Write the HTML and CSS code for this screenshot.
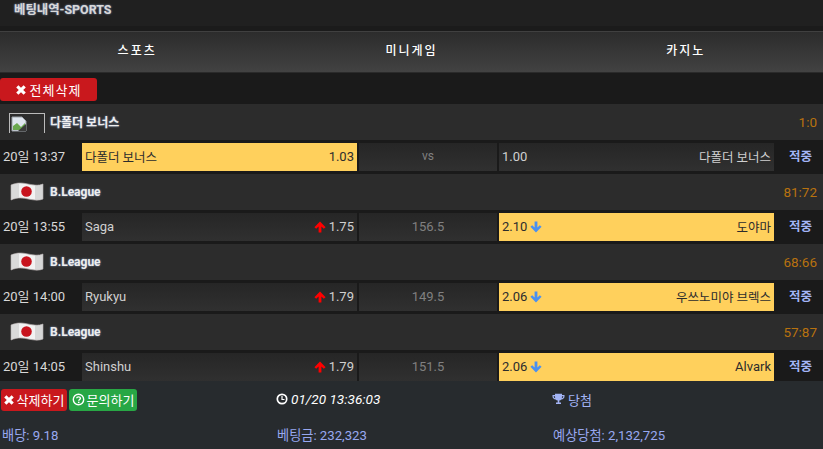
FILE: index.html
```html
<!DOCTYPE html>
<html lang="en">
<head>
<meta charset="UTF-8">
<meta name="viewport" content="width=device-width, initial-scale=1.0">
<title>베팅내역-SPORTS</title>
<link rel="stylesheet" href="styles.css">
</head>
<body>

<svg class="defs" width="0" height="0">
    <symbol id="i-times" viewBox="1 1 10 10"><path d="M1.2 3.4 3.4 1.2 6 3.800 8.600 1.200 10.800 3.400 8.200 6 10.800 8.600 8.600 10.800 6 8.200 3.400 10.800 1.200 8.600 3.800 6Z"/></symbol>
    <symbol id="i-up" viewBox="0 0 12 12"><path d="M6 .6 11.6 6.2 9.8 7.8 7.4 5.4V11.6H4.6V5.4L2.2 7.8.4 6.2Z"/></symbol>
    <symbol id="i-down" viewBox="0 0 12 12"><path d="M6 11.4 11.6 5.8 9.8 4.2 7.4 6.6V.4H4.6V6.6L2.2 4.2.4 5.8Z"/></symbol>
    <symbol id="i-flag" viewBox="0 0 34 19">
        <path d="M1 3C8 0 13 1 18 2 24 3 28 4 33 2V17C28 19 24 18 18 17 13 16 8 15 1 18Z" fill="#f2f2f2" stroke="#a8a0a0" stroke-width=".7"/>
        <path d="M1 3C4 2 7 1.500 9 1.500V15.500C7 15.800 4 16.500 1 18Z" fill="#c9c9c9" opacity=".6"/>
        <path d="M25 3.200C28 3.400 30 3 33 2V17C30 18 28 18.200 25 18Z" fill="#c4c4c4" opacity=".6"/>
        <circle cx="16.500" cy="9.500" r="5.300" fill="#c8141e"/>
    </symbol>
</svg>

<div class="title-bar">베팅내역-SPORTS</div>

<div class="tabs">
    <a class="tab">스포츠</a>
    <a class="tab">미니게임</a>
    <a class="tab">카지노</a>
</div>

<div class="toolbar">
    <button class="btn btn-red btn-all"><svg class="ico"><use href="#i-times"/></svg>전체삭제</button>
</div>

<div class="league">
    <span class="broken">
        <svg width="16" height="16" viewBox="0 0 16 16">
            <path d="M1 1H11L15 5V15H1Z" fill="#dfe6ef" stroke="#9aa0a6" stroke-width="1"/>
            <path d="M2 14V10L6 7 10 11 14 7V14Z" fill="#6aa84f"/>
            <path d="M7 15 15 8V15Z" fill="#3a3a3a"/>
        </svg>
    </span>
    <span class="league-name">다폴더 보너스</span>
    <span class="score">1:0</span>
</div>
<div class="match">
    <span class="time">20일 13:37</span>
    <div class="odd picked"><span class="ko">다폴더 보너스</span><span class="rate">1.03</span></div>
    <div class="mid vs">vs</div>
    <div class="odd"><span class="rate">1.00</span><span class="ko">다폴더 보너스</span></div>
    <span class="status">적중</span>
</div>

<div class="league">
    <svg class="flag"><use href="#i-flag"/></svg>
    <span class="league-name">B.League</span>
    <span class="score">81:72</span>
</div>
<div class="match">
    <span class="time">20일 13:55</span>
    <div class="odd"><span>Saga</span><span class="rate"><svg class="arrow up"><use href="#i-up"/></svg>1.75</span></div>
    <div class="mid">156.5</div>
    <div class="odd picked"><span class="rate">2.10<svg class="arrow down"><use href="#i-down"/></svg></span><span class="ko">도야마</span></div>
    <span class="status">적중</span>
</div>

<div class="league">
    <svg class="flag"><use href="#i-flag"/></svg>
    <span class="league-name">B.League</span>
    <span class="score">68:66</span>
</div>
<div class="match">
    <span class="time">20일 14:00</span>
    <div class="odd"><span>Ryukyu</span><span class="rate"><svg class="arrow up"><use href="#i-up"/></svg>1.79</span></div>
    <div class="mid">149.5</div>
    <div class="odd picked"><span class="rate">2.06<svg class="arrow down"><use href="#i-down"/></svg></span><span class="ko">우쓰노미야 브렉스</span></div>
    <span class="status">적중</span>
</div>

<div class="league">
    <svg class="flag"><use href="#i-flag"/></svg>
    <span class="league-name">B.League</span>
    <span class="score">57:87</span>
</div>
<div class="match last">
    <span class="time">20일 14:05</span>
    <div class="odd"><span>Shinshu</span><span class="rate"><svg class="arrow up"><use href="#i-up"/></svg>1.79</span></div>
    <div class="mid">151.5</div>
    <div class="odd picked"><span class="rate">2.06<svg class="arrow down"><use href="#i-down"/></svg></span><span>Alvark</span></div>
    <span class="status">적중</span>
</div>

<div class="summary">
    <div class="summary-cell actions">
        <button class="btn btn-red"><svg class="ico"><use href="#i-times"/></svg>삭제하기</button>
        <button class="btn btn-green">
            <svg class="ico ico-q" viewBox="0 0 12 12"><circle cx="6" cy="6" r="4.800" fill="none" stroke="#fff" stroke-width="1.300"/><path d="M4.300 4.900C4.400 3.200 7.800 3.100 7.800 4.900 7.800 6 6.200 6 6.200 7.200" fill="none" stroke="#fff" stroke-width="1.300"/><rect x="5.500" y="8" width="1.400" height="1.300" fill="#fff"/></svg>문의하기</button>
    </div>
    <div class="summary-cell bet-time">
        <svg class="ico-clock" viewBox="0 0 12 12"><circle cx="6" cy="6" r="4.700" fill="none" stroke="#fff" stroke-width="1.700"/><path d="M6 3V6.500H8.500" fill="none" stroke="#fff" stroke-width="1.200"/></svg>
        <em>01/20 13:36:03</em>
    </div>
    <div class="summary-cell result">
        <svg class="ico-trophy" viewBox="0 0 13 12"><path d="M3 .8H10V2H12.500V3.500C12.500 5.300 11 6.300 9.400 6.400 8.900 7 8.200 7.300 7.300 7.500V9.500H9V11H4V9.500H5.700V7.500C4.800 7.300 4.100 7 3.600 6.400 2 6.300 .5 5.300 .5 3.500V2H3ZM1.700 3.200V3.600C1.700 4.400 2.400 5 3.200 5.200 3.100 4.600 3 3.900 3 3.200ZM11.300 3.200H10C10 3.900 9.900 4.600 9.800 5.200 10.600 5 11.300 4.400 11.300 3.600Z"/></svg>
        당첨
    </div>
    <div class="summary-cell total">배당: 9.18</div>
    <div class="summary-cell total">베팅금: 232,323</div>
    <div class="summary-cell total">예상당첨: 2,132,725</div>
</div>

</body>
</html>
```

FILE: styles.css
```css
* {
    box-sizing: border-box;
}

body {
    margin: 0;
    height: 449px;
    overflow: hidden;
    background-color: #1a1a1a;
    font-family: Roboto, "Noto Sans CJK KR", sans-serif;
    font-size: 13px;
    color: #ccc;
}

.defs {
    position: absolute;
}

.title-bar {
    height: 32px;
    padding: 1px 0 0 14px;
    line-height: 17px;
    background: linear-gradient(to bottom, #202020 0, #202020 26px, #1b1b1b 26px, #1b1b1b 31px, #404040 31px);
    color: #d8d8d8;
    font-size: 12.400px;
    font-weight: bold;
    text-shadow: 0 0 2px #8aa0c8;
}

.tabs {
    display: grid;
    grid-template-columns: repeat(3, 1fr);
    height: 41px;
    background: linear-gradient(to bottom, #2c2c2c, #424242);
    border-bottom: 1px solid #2a2a2a;
}

.tab {
    text-align: center;
    line-height: 39px;
    color: #fff;
    font-size: 12px;
    font-weight: 500;
    letter-spacing: 2px;
}

.toolbar {
    height: 31px;
    padding-top: 5px;
}

.btn {
    display: inline-flex;
    align-items: center;
    justify-content: center;
    border: none;
    border-radius: 3px;
    color: #fff;
    font-family: inherit;
    font-size: 13px;
    padding: 0;
}

.btn-red {
    background-color: #c9181d;
}

.btn-green {
    background-color: #28a745;
}

.btn-all {
    width: 97px;
    height: 23px;
    letter-spacing: 1px;
}

.ico {
    width: 10px;
    height: 10px;
    margin-right: 4px;
    fill: #fff;
}

.league {
    display: flex;
    align-items: center;
    height: 36px;
    padding: 0 6px 1px 0;
    background-color: #2c2c2c;
}

.broken {
    display: flex;
    align-items: flex-end;
    width: 36px;
    height: 20px;
    margin: 3px 5px 0 9px;
    padding: 1px;
    border: 1px solid #bbb;
    border-bottom: none;
}

.flag {
    width: 34px;
    height: 19px;
    margin: 0 6px 0 10px;
}

.league-name {
    color: #eee;
    font-size: 12px;
    font-weight: bold;
    text-shadow: 0 0 2px #8aa0c8;
}

.score {
    margin-left: auto;
    color: #b8720f;
    font-size: 13.500px;
}

.match {
    display: grid;
    grid-template-columns: 82px 275px 142px 275px 49px;
    height: 34px;
    padding: 3px 0;
    background-color: #1a1a1a;
}

.match.last {
    height: 31px;
    padding-bottom: 0;
}

.time {
    padding-left: 3px;
    line-height: 28px;
    color: #d8d8d8;
    white-space: nowrap;
}

.odd {
    display: flex;
    justify-content: space-between;
    align-items: center;
    padding: 0 3px 2px 3px;
    background: linear-gradient(to bottom, #262626, #303030);
    color: #d0d0d0;
}

.odd.picked {
    background: #ffd05c;
    color: #2c2c2c;
}

.ko {
    font-size: 12.500px;
}

.rate {
    display: flex;
    align-items: center;
}

.arrow {
    width: 12px;
    height: 12px;
    margin: 1px 3px 0;
}

.arrow.up {
    fill: #f00;
}

.arrow.down {
    fill: #4a90f0;
}

.mid {
    margin: 0 2px;
    text-align: center;
    line-height: 27px;
    background: linear-gradient(to bottom, #262626, #303030);
    color: #808080;
}

.mid.vs {
    font-size: 12px;
}

.status {
    padding-left: 4px;
    text-align: center;
    line-height: 27px;
    color: #a3b4f5;
    font-size: 12.500px;
    font-weight: bold;
}

.summary {
    display: grid;
    grid-template-columns: 275px 276px 1fr;
    grid-template-rows: 36px 32px;
    height: 68px;
    background-color: #272b2e;
    color: #98a8f0;
    font-size: 13px;
}

.summary-cell {
    display: flex;
    align-items: center;
    padding: 0 1px;
}

.total {
    padding: 2px 1px 0 2px;
    font-size: 13.200px;
}

.actions {
    gap: 2px;
    padding-top: 1px;
}

.actions .btn {
    width: 66px;
    height: 22px;
}

.actions .btn-green {
    width: 68px;
}

.actions .ico {
    margin-right: 3px;
}

.actions .ico-q {
    width: 13px;
    height: 13px;
    margin-right: 2px;
}

.bet-time {
    color: #fff;
}

.ico-clock {
    width: 12px;
    height: 12px;
    margin-right: 3px;
}

.bet-time em {
    font-size: 13.600px;
}

.result {
    color: #a3b4f5;
}

.ico-trophy {
    width: 13px;
    height: 12px;
    margin-right: 3px;
    fill: #a3b4f5;
}
```
